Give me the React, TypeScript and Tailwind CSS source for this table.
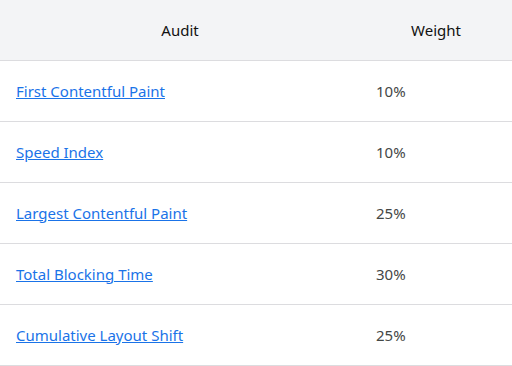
import React from 'react';

const METRICS = [
  { name: 'First Contentful Paint', weight: '10%' },
  { name: 'Speed Index', weight: '10%' },
  { name: 'Largest Contentful Paint', weight: '25%' },
  { name: 'Total Blocking Time', weight: '30%' },
  { name: 'Cumulative Layout Shift', weight: '25%' },
];

export default function App() {
  return (
    <div className="w-[512px] h-[366px] bg-white overflow-hidden font-['Noto_Sans',sans-serif] text-[15px]">
      {/* Header */}
      <div className="grid grid-cols-[360px_1fr] h-[61px] bg-[#f3f4f6] border-b border-[#dcdcdf] text-[#111111]">
        <div className="flex items-center justify-center">Audit</div>
        <div className="flex items-center justify-center">Weight</div>
      </div>

      {METRICS.map((m) => (
        <div key={m.name} className="grid grid-cols-[360px_1fr] h-[61px] border-b border-[#dcdcdf]">
          <div className="flex items-center px-4">
            <a href="#" className="text-[#1a73e8] underline">{m.name}</a>
          </div>
          <div className="flex items-center px-4 text-[#444746]">{m.weight}</div>
        </div>
      ))}
    </div>
  );
}
